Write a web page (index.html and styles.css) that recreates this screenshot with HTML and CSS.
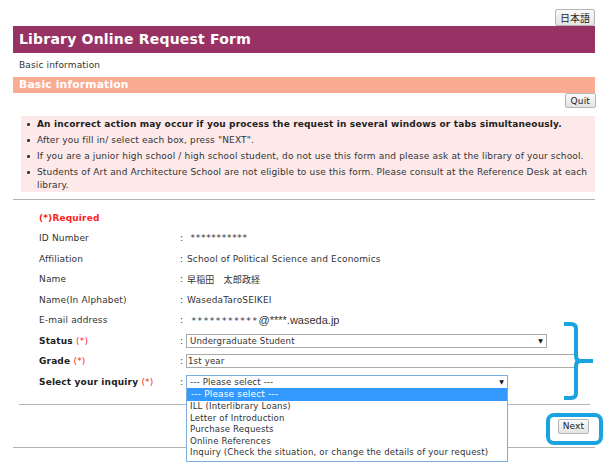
FILE: index.html
```html
<!DOCTYPE html>
<html lang="en">
<head>
<meta charset="utf-8">
<title>Library Online Request Form</title>
<link rel="stylesheet" href="styles.css">
</head>
<body>
<div class="page">
  <div class="lang-row"><button class="btn btn-lang">日本語</button></div>
  <h1 class="title-bar">Library Online Request Form</h1>
  <div class="crumb">Basic information</div>
  <h2 class="section-bar">Basic information</h2>
  <div class="quit-row"><button class="btn btn-quit">Quit</button></div>
  <ul class="notice">
    <li class="strong">An incorrect action may occur if you process the request in several windows or tabs simultaneously.</li>
    <li>After you fill in/ select each box, press "NEXT".</li>
    <li>If you are a junior high school / high school student, do not use this form and please ask at the library of your school.</li>
    <li>Students of Art and Architecture School are not eligible to use this form. Please consult at the Reference Desk at each library.</li>
  </ul>
  <hr class="rule">
  <div class="form">
    <div class="required">(*)Required</div>
    <div class="label">ID Number</div><div class="colon">:</div><div class="value"><span class="stars">&nbsp;***********</span></div>
    <div class="label">Affiliation</div><div class="colon">:</div><div class="value">School of Political Science and Economics</div>
    <div class="label">Name</div><div class="colon">:</div><div class="value cjk">早稲田　太郎政経</div>
    <div class="label">Name(In Alphabet)</div><div class="colon">:</div><div class="value">WasedaTaroSEIKEI</div>
    <div class="label">E-mail address</div><div class="colon">:</div><div class="value"><span class="stars stars-mail">&nbsp;***********</span><span class="mail">@****.waseda.jp</span></div>
    <div class="label bold">Status <span class="req">(*)</span></div><div class="colon">:</div><div class="value"><div class="select select-status"><span>Undergraduate Student</span><span class="arrow">▼</span></div></div>
    <div class="label bold">Grade <span class="req">(*)</span></div><div class="colon">:</div><div class="value"><div class="input">1st year</div></div>
    <div class="label bold">Select your inquiry <span class="req">(*)</span></div><div class="colon">:</div><div class="value"><div class="select select-inquiry"><span>--- Please select ---</span><span class="arrow">▼</span></div></div>
  </div>
  <hr class="rule rule-inner">
  <div class="next-row"><button class="btn btn-next">Next</button></div>
  <hr class="rule rule-bottom">
</div>
<ul class="dropdown">
  <li class="active">--- Please select ---</li>
  <li>ILL (Interlibrary Loans)</li>
  <li>Letter of Introduction</li>
  <li>Purchase Requests</li>
  <li>Online References</li>
  <li>Inquiry (Check the situation, or change the details of your request)</li>
</ul>
<svg class="annot" width="610" height="470" viewBox="0 0 610 470">
  <path d="M564 324 H571 Q576 324 576 329 V356 Q576 361 581 361 H593 M581 361 Q576 361 576 366 V393 Q576 398 571 398 H564" fill="none" stroke="#19a3e0" stroke-width="4"/>
  <rect x="548" y="415" width="53" height="28" rx="6" ry="6" fill="none" stroke="#19a3e0" stroke-width="4"/>
</svg>
</body>
</html>
```

FILE: styles.css
```css
html, body {
  margin: 0;
  padding: 0;
  background: #fff;
}
body {
  font-family: "DejaVu Sans", Verdana, sans-serif;
  font-size: 9px;
  letter-spacing: 0.15px;
  color: #333;
  position: relative;
  width: 610px;
  height: 470px;
  overflow: hidden;
}
.page {
  margin-left: 13px;
  width: 582px;
  padding-top: 9px;
}
.lang-row, .quit-row, .next-row {
  display: flex;
  justify-content: flex-end;
}
.btn {
  font-family: "DejaVu Sans", Verdana, sans-serif;
  font-size: 9px;
  letter-spacing: 0.15px;
  color: #222;
  background: linear-gradient(#fbfbfb, #e3e3e3);
  border: 1px solid #b5b5b5;
  border-radius: 2px;
  padding: 0 5px;
  margin: 0;
}
.btn-lang {
  height: 17px;
  font-family: "Noto Sans CJK JP", sans-serif;
  font-size: 10px;
  letter-spacing: 0;
  padding: 0 4px;
}
.title-bar {
  margin: 0;
  height: 27px;
  line-height: 27px;
  background: #993264;
  color: #fff;
  font-size: 14px;
  font-weight: bold;
  padding-left: 6px;
  letter-spacing: 0.2px;
}
.crumb {
  height: 24px;
  line-height: 24px;
  padding-left: 6px;
}
.section-bar {
  margin: 0;
  height: 16px;
  line-height: 16px;
  background: #fcab93;
  color: #fff;
  font-size: 10.8px;
  font-weight: bold;
  padding-left: 6px;
}
.btn-quit {
  height: 15px;
  margin-right: -1px;
}
.notice {
  margin: 8px 0 0 8px;
  padding: 1.5px 0 0 16px;
  background: #fde9e9;
  list-style: none;
}
.notice li {
  line-height: 13px;
  margin-bottom: 3px;
  position: relative;
}
.notice li:last-child {
  margin-bottom: 0;
}
.notice li::before {
  content: "";
  position: absolute;
  left: -10px;
  top: 5.5px;
  width: 2.5px;
  height: 2.5px;
  background: #333;
  border-radius: 50%;
}
.notice li.strong {
  font-weight: bold;
  color: #222;
}
.rule {
  border: 0;
  border-top: 1px solid #b3b3b3;
  margin: 7px 0 0 0;
  height: 0;
}
.rule-inner {
  margin: 12px 5px 0 6px;
}
.rule-bottom {
  margin-top: 0;
}
.form {
  display: grid;
  grid-template-columns: 141px 7px 1fr;
  grid-auto-rows: 20.5px;
  align-items: center;
  padding-left: 26px;
  margin-top: 8px;
}
.required {
  grid-column: 1 / 4;
  color: #f22;
  font-weight: bold;
}
.label.bold {
  font-weight: bold;
  color: #222;
}
.req {
  color: #f22;
  font-weight: normal;
}
.stars {
  letter-spacing: 0.7px;
}
.stars-mail {
  letter-spacing: 1.6px;
}
.cjk {
  font-family: "Noto Sans CJK JP", sans-serif;
  font-size: 9px;
}
.mail {
  font-family: "Liberation Sans", Arial, sans-serif;
  font-size: 11px;
  letter-spacing: 0;
}
.select, .input {
  height: 14px;
  box-sizing: border-box;
  border: 1px solid #a9a9a9;
  background: #fff;
  display: flex;
  align-items: center;
  justify-content: space-between;
  padding: 0 3px;
  font-size: 8.6px;
  margin-left: -1px;
}
.select-status { width: 361px; }
.input { width: 390px; padding-left: 1px; }
.select-inquiry { width: 322px; border-color: #7eaee0; }
.arrow {
  font-size: 6px;
  color: #111;
}
.next-row {
  height: 42px;
  align-items: center;
  padding-right: 6px;
}
.btn-next {
  height: 15px;
  width: 31px;
  padding: 0;
}
.dropdown {
  position: absolute;
  left: 186px;
  top: 388px;
  width: 322px;
  box-sizing: border-box;
  margin: 0;
  padding: 0 0 2px 0;
  list-style: none;
  background: #fff;
  border: 1px solid #7eaee0;
  border-top: 0;
  font-size: 8.6px;
}
.dropdown li {
  line-height: 11.5px;
  padding-left: 3px;
  white-space: nowrap;
}
.dropdown li.active {
  background: #3399ff;
  color: #fff;
  line-height: 13px;
  font-size: 9px;
  padding-left: 4px;
}
.annot {
  position: absolute;
  left: 0;
  top: 0;
  pointer-events: none;
}
```
